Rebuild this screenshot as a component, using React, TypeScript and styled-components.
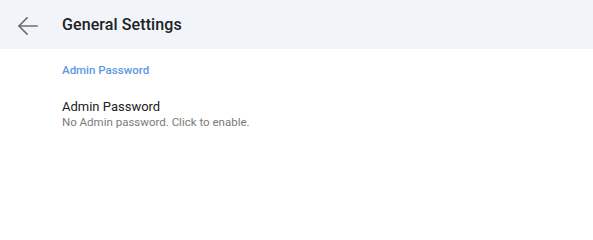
import React from "react";
import styled, { createGlobalStyle } from "styled-components";

const Global = createGlobalStyle`
  html, body { margin: 0; padding: 0; background: #ffffff; }
  body { font-family: Roboto, "Noto Sans", Arial, sans-serif; }
`;

const Page = styled.div`
  width: 593px;
  height: 234px;
  background: #ffffff;
  display: flex;
  flex-direction: column;
`;

const Header = styled.header`
  height: 49px;
  background: #f1f5f9;
  display: flex;
  align-items: center;
  box-sizing: border-box;
  padding-left: 16px;
`;

const BackButton = styled.button`
  width: 24px;
  height: 24px;
  padding: 0;
  border: none;
  background: transparent;
  display: flex;
  align-items: center;
  justify-content: center;
  margin-right: 22px;
  margin-top: 2px;
  cursor: pointer;
`;

const Title = styled.h1`
  margin: 0;
  font-size: 16px;
  font-weight: 500;
  color: #202124;
  letter-spacing: 0.1px;
`;

const Content = styled.div`
  display: flex;
  flex-direction: column;
  padding-left: 62px;
`;

const SectionLabel = styled.div`
  margin-top: 14px;
  font-size: 11.5px;
  font-weight: 500;
  color: #5a9ae0;
  line-height: 14px;
`;

const Item = styled.div`
  margin-top: 22px;
  display: flex;
  flex-direction: column;
  cursor: pointer;
`;

const ItemTitle = styled.div`
  font-size: 13px;
  color: #202124;
  line-height: 16px;
`;

const ItemSub = styled.div`
  font-size: 11.5px;
  color: #7b7b7b;
  line-height: 14px;
`;

export default function App() {
  return (
    <>
      <Global />
      <Page>
        <Header>
          <BackButton aria-label="Back">
            <svg width="24" height="24" viewBox="0 0 24 24" fill="none">
              <path
                d="M21 12H3M11 4L3 12L11 20"
                stroke="#6b6f73"
                strokeWidth="1.6"
                strokeLinecap="square"
              />
            </svg>
          </BackButton>
          <Title>General Settings</Title>
        </Header>
        <Content>
          <SectionLabel>Admin Password</SectionLabel>
          <Item>
            <ItemTitle>Admin Password</ItemTitle>
            <ItemSub>No Admin password. Click to enable.</ItemSub>
          </Item>
        </Content>
      </Page>
    </>
  );
}
